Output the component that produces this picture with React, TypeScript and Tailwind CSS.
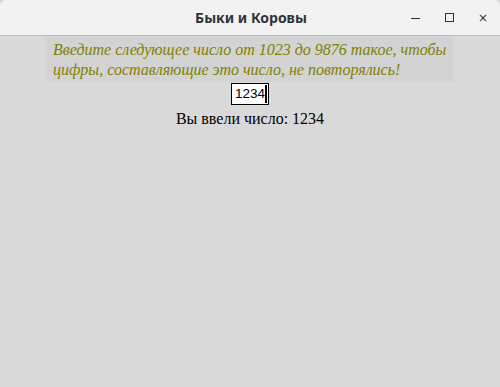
export default function App() {
  return (
    <div className="w-[500px] h-[387px] flex flex-col bg-[#d9d9d9] overflow-hidden">
      {/* title bar */}
      <div className="h-[36px] shrink-0 flex items-center bg-[#f2f2f2] border-b border-[#bdbdbd] rounded-t-[6px] relative">
        <div className="flex-1 text-center font-['Noto_Sans',sans-serif] font-bold text-[14px] text-[#2e3436] pl-[2px]">
          Быки и Коровы
        </div>
        <div className="absolute right-0 top-0 h-full flex items-center">
          <div className="w-[34px] flex justify-center">
            <div className="w-[9px] h-[1.5px] bg-[#2e3436] mt-[2px]" />
          </div>
          <div className="w-[34px] flex justify-center">
            <div className="w-[9px] h-[9px] border border-[#2e3436]" />
          </div>
          <div className="w-[34px] flex justify-center text-[#2e3436] text-[12px] leading-none font-['DejaVu_Sans',sans-serif]">
            ×
          </div>
        </div>
      </div>

      <div className="flex flex-col items-center pt-[1px]">
        <div className="w-[408px] h-[45px] bg-[#d3d3d3] px-[7px] pt-[3px] font-['Liberation_Serif',serif] italic text-[16px] leading-[20px] text-[#808000]">
          Введите следующее число от 1023 до 9876 такое, чтобы цифры, составляющие это число, не повторялись!
        </div>
        <div className="mt-[1px] w-[38px] h-[22px] bg-white border border-black flex items-center pl-[3px] font-['Liberation_Sans',sans-serif] text-[13.5px] leading-none text-black">
          <span>1234</span>
          <span className="w-[2px] h-[18px] bg-black shrink-0" />
        </div>
        <div className="mt-[4px] font-['Liberation_Serif',serif] text-[16px] leading-[20px] text-black">
          Вы ввели число: 1234
        </div>
      </div>
    </div>
  );
}
